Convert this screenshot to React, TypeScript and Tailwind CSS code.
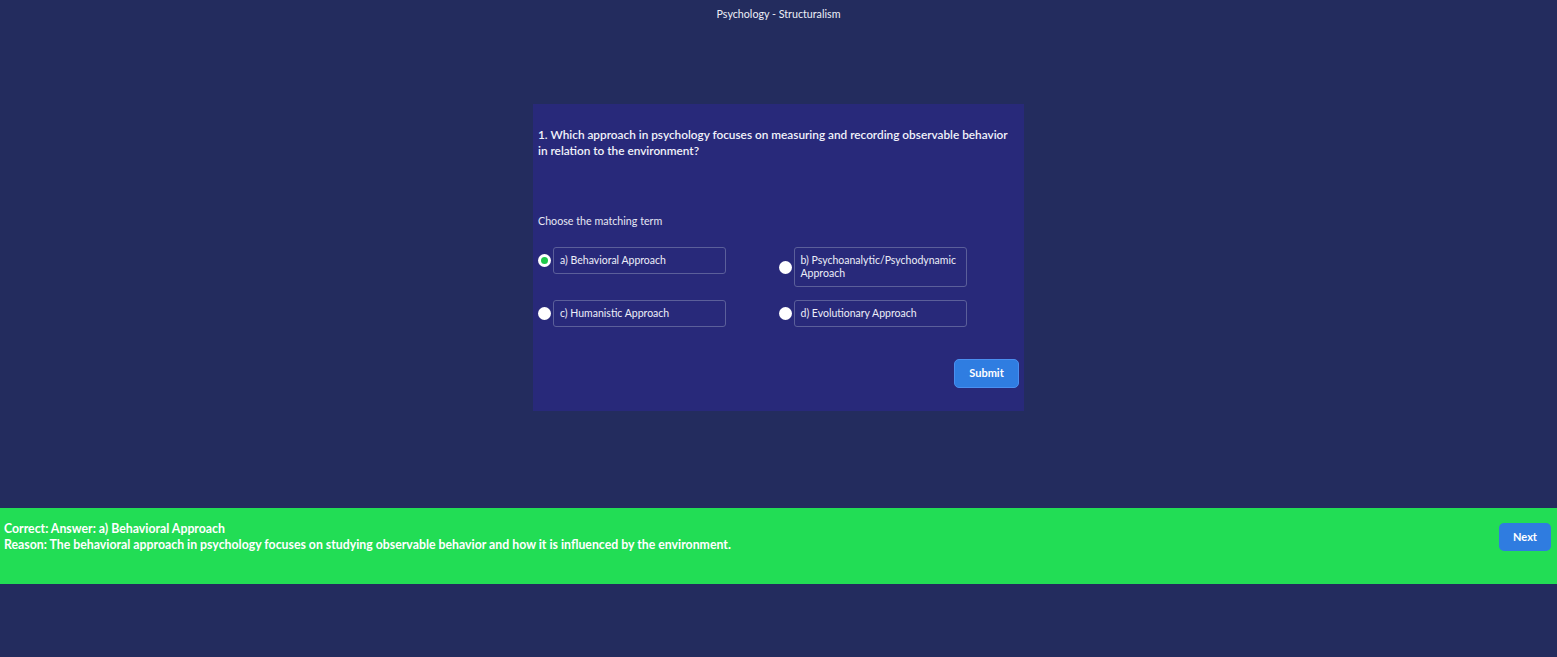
import { useState } from "react";

const options = [
  { id: "a", label: "a) Behavioral Approach" },
  { id: "b", label: "b) Psychoanalytic/Psychodynamic Approach" },
  { id: "c", label: "c) Humanistic Approach" },
  { id: "d", label: "d) Evolutionary Approach" },
];

export default function App() {
  const [selected, setSelected] = useState("a");

  return (
    <main
      className="min-h-[657px] bg-[#232c5e] text-white flex flex-col"
      style={{ fontFamily: "Lato, 'Open Sans', sans-serif" }}
    >
      {/* HEADER */}
      <header className="h-[28px] flex items-center justify-center text-[10.7px] text-[#eef0f8]">
        Psychology - Structuralism
      </header>

      {/* QUIZ CARD */}
      <section className="mx-auto mt-[76px] w-[491px] h-[307px] bg-[#28297a] pl-[5px] pr-[5px] pt-[23px]">
        <h2 className="text-[11.8px] font-semibold leading-[16px] text-[#f1f2fa]">
          1. Which approach in psychology focuses on measuring and recording observable behavior
          <br />
          in relation to the environment?
        </h2>

        <p className="mt-[55px] text-[10.7px] leading-[14px] text-[#e6e7f3]">Choose the matching term</p>

        <div className="mt-[19px] grid grid-cols-2 gap-y-[13px] items-start">
          {options.map((opt) => (
            <label key={opt.id} className="flex items-center gap-[2px] cursor-pointer">
              <span
                onClick={() => setSelected(opt.id)}
                className="w-[13px] h-[13px] rounded-full bg-white flex items-center justify-center shrink-0"
              >
                {selected === opt.id && <span className="w-[7px] h-[7px] rounded-full bg-[#1fc94a]" />}
              </span>
              <span className="w-[173px] border border-[#5b5f9a] rounded-[3px] px-[6px] py-[6px] text-[10.5px] leading-[13px] text-[#eceef8]">
                {opt.label}
              </span>
            </label>
          ))}
        </div>

        <div className="mt-[32px] flex justify-end">
          <button className="w-[65px] h-[29px] rounded-[5px] bg-[#2f7de1] border border-[#4a8ff0] text-[11px] font-bold text-white">
            Submit
          </button>
        </div>
      </section>

      {/* FEEDBACK BANNER */}
      <section className="mt-[97px] h-[76px] bg-[#22dd55] flex items-start justify-between pl-[4px] pr-[6px]">
        <div className="pt-[13px] text-[12.3px] font-bold leading-[16px] text-white">
          <p>Correct: Answer: a) Behavioral Approach</p>
          <p>Reason: The behavioral approach in psychology focuses on studying observable behavior and how it is influenced by the environment.</p>
        </div>
        <button className="mt-[15px] w-[52px] h-[28px] rounded-[5px] bg-[#2f7ce0] text-[11px] font-bold text-white">
          Next
        </button>
      </section>
    </main>
  );
}
